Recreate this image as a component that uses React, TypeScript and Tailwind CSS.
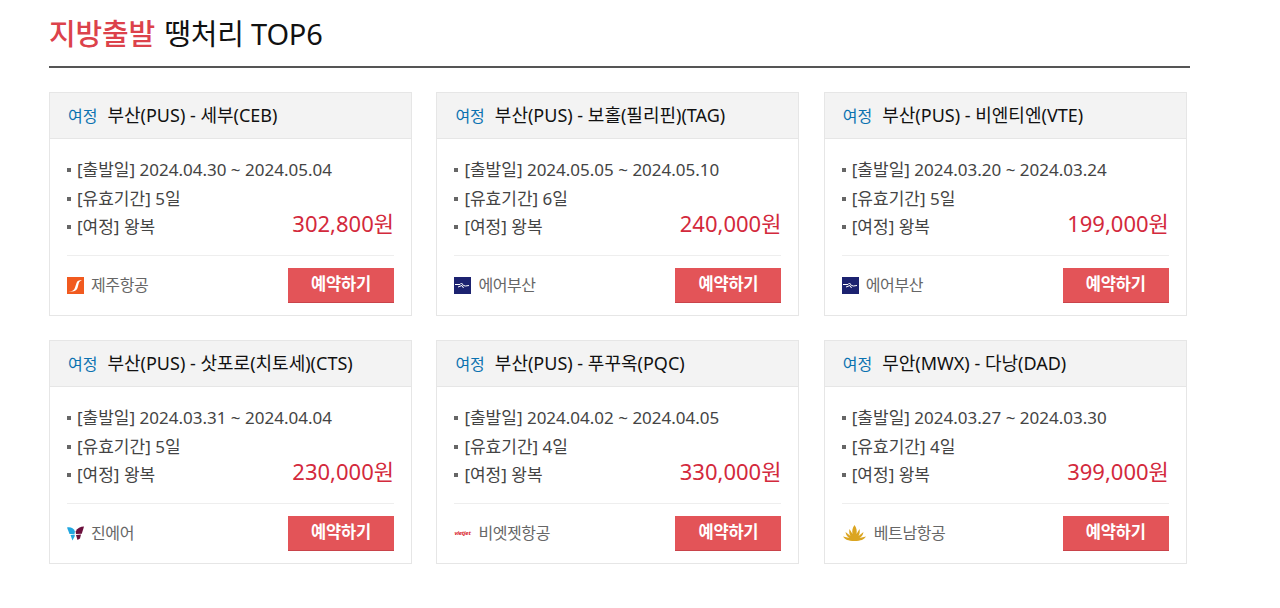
const fontStack = '"Noto Sans", "Noto Sans CJK KR", sans-serif';

type Logo = "jeju" | "busan" | "jin" | "vietjet" | "vietnam";

type Deal = {
  route: string;
  dates: string;
  days: string;
  price: string;
  airline: string;
  logo: Logo;
};

const deals: Deal[] = [
  { route: "부산(PUS) - 세부(CEB)", dates: "2024.04.30 ~ 2024.05.04", days: "5일", price: "302,800원", airline: "제주항공", logo: "jeju" },
  { route: "부산(PUS) - 보홀(필리핀)(TAG)", dates: "2024.05.05 ~ 2024.05.10", days: "6일", price: "240,000원", airline: "에어부산", logo: "busan" },
  { route: "부산(PUS) - 비엔티엔(VTE)", dates: "2024.03.20 ~ 2024.03.24", days: "5일", price: "199,000원", airline: "에어부산", logo: "busan" },
  { route: "부산(PUS) - 삿포로(치토세)(CTS)", dates: "2024.03.31 ~ 2024.04.04", days: "5일", price: "230,000원", airline: "진에어", logo: "jin" },
  { route: "부산(PUS) - 푸꾸옥(PQC)", dates: "2024.04.02 ~ 2024.04.05", days: "4일", price: "330,000원", airline: "비엣젯항공", logo: "vietjet" },
  { route: "무안(MWX) - 다낭(DAD)", dates: "2024.03.27 ~ 2024.03.30", days: "4일", price: "399,000원", airline: "베트남항공", logo: "vietnam" }
];

function AirlineLogo({ logo }: { logo: Logo }) {
  if (logo === "jeju") {
    return (
      <svg width="17" height="17" viewBox="0 0 17 17" className="shrink-0">
        <rect width="17" height="17" fill="#f15a1f" />
        <path d="M2 14c3 .6 5-.4 6-3.500L9.500 6C10.200 3.800 12 3 15 3c-2 .8-2.800 1.800-3.300 3.500L10.500 11C9.500 14 6 15.500 2 14z" fill="#fff" />
      </svg>
    );
  }
  if (logo === "busan") {
    return (
      <svg width="17" height="17" viewBox="0 0 17 17" className="shrink-0">
        <rect width="17" height="17" fill="#1c2270" />
        <path d="M1 7.500h5l1.500-1.500 2 2.500 2 .5 3.500-.5M8 8.500l1.500 2.500M4 10l4-1.500" stroke="#fff" strokeWidth="1" fill="none" />
      </svg>
    );
  }
  if (logo === "jin") {
    return (
      <svg width="17" height="15" viewBox="0 0 17 15" className="shrink-0">
        <path d="M0 1.500c3.500-.8 6.500.5 8 4l-.5 2.500H2.500z" fill="#22a7e0" />
        <path d="M3.500 9 7.500 8.500l.3 1.500-2.300 4.500z" fill="#22a7e0" />
        <path d="M17 .5c-3.500 0-6.800 1.500-8.300 5L9 8l5.800-.2z" fill="#6b0f3c" />
        <path d="M9 9l5-.5-1 4-2.500 1.500z" fill="#6b0f3c" />
      </svg>
    );
  }
  if (logo === "vietjet") {
    return (
      <span className="w-[17px] shrink-0 text-[6px] font-bold italic leading-none tracking-[-0.3px] text-[#d9262e]">
        vietjet
      </span>
    );
  }
  return (
    <svg width="25" height="16" viewBox="0 0 25 16" className="shrink-0">
      <path
        d="M12.500 0c2.200 3 2.600 6 2 9l3-5c.6 2.500.2 5-1 7l5-4c-.4 3-2 5-4 6l6.500-1.500C22 14.500 19 16 12.500 16S3 14.500 1 11.500L7.500 13c-2-1-3.600-3-4-6l5 4c-1.200-2-1.600-4.500-1-7l3 5c-.6-3-.2-6 2-9z"
        fill="#dba521"
      />
    </svg>
  );
}

function Row({ text }: { text: string }) {
  return (
    <li className="flex items-center">
      <span className="mr-[6px] h-1 w-1 bg-[#666]" />
      {text}
    </li>
  );
}

function DealCard({ deal }: { deal: Deal }) {
  return (
    <div className="h-[224px] border border-[#e6e6e6] bg-white">
      <div className="flex h-[46px] items-center border-b border-[#e6e6e6] bg-[#f3f3f3] px-[18px]">
        <span className="mr-[10px] text-[16px] text-[#0b72b0]">여정</span>
        <span className="text-[18px] text-[#111]">{deal.route}</span>
      </div>
      <div className="px-[17px]">
        <div className="relative border-b border-[#eeeeee] pb-[13px] pt-[17px]">
          <ul className="text-[17px] leading-[28.500px] text-[#444]">
            <Row text={`[출발일] ${deal.dates}`} />
            <Row text={`[유효기간] ${deal.days}`} />
            <Row text="[여정] 왕복" />
          </ul>
          <span className="absolute bottom-[17px] right-0 text-[22px] leading-[30px] text-[#d3293c]">
            {deal.price}
          </span>
        </div>
        <div className="flex items-center justify-between pt-3">
          <div className="flex items-center gap-[7px] text-[16px] tracking-[-0.4px] text-[#666]">
            <AirlineLogo logo={deal.logo} />
            <span>{deal.airline}</span>
          </div>
          <button className="h-[35px] w-[106px] border-b border-[#c9434a] bg-[#e35458] text-[16.500px] font-bold tracking-[-0.2px] text-white">
            예약하기
          </button>
        </div>
      </div>
    </div>
  );
}

export default function App() {
  return (
    <div className="h-[608px] bg-white pl-[49px] pt-[13px]" style={{ fontFamily: fontStack }}>
      <div className="w-[1141px]">
        <h2 className="h-[55px] border-b-2 border-[#555] text-[29px] font-normal leading-[42px] tracking-[-0.2px] text-[#111]">
          <span className="mr-[2px] font-medium text-[#dc424b]">지방출발</span> 땡처리 TOP6
        </h2>
      </div>
      <div className="mt-[24px] grid w-[1137.800px] grid-cols-3 gap-x-[24.400px] gap-y-[24px]">
        {deals.map((deal) => (
          <DealCard key={deal.route} deal={deal} />
        ))}
      </div>
    </div>
  );
}
